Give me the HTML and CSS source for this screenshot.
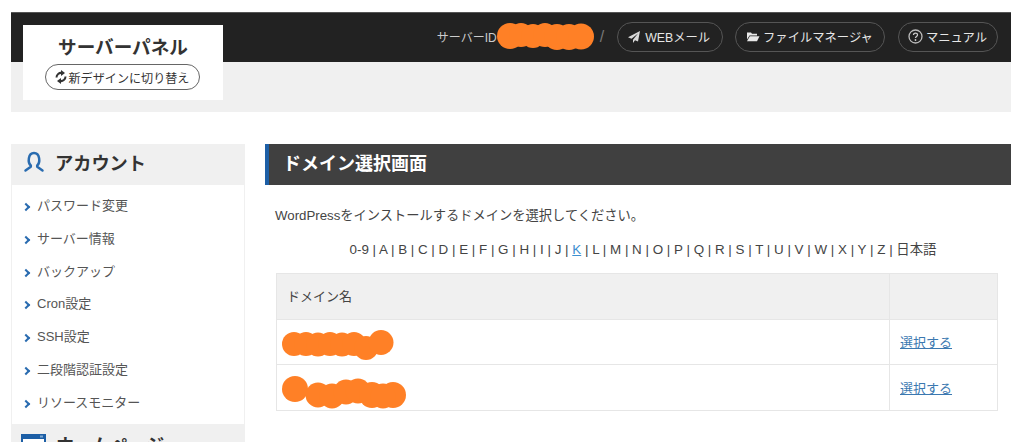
FILE: index.html
```html
<!DOCTYPE html>
<html lang="ja">
<head>
<meta charset="utf-8">
<title>サーバーパネル</title>
<link rel="stylesheet" href="styles.css">
</head>
<body>
<div class="page">
  <header class="header">
    <div class="topbar">
      <span class="server-id">サーバーID</span>
      <svg class="blob-id" width="97" height="28" viewBox="0 0 97 28"><g fill="#ff8026"><circle cx="13" cy="14" r="13"/><circle cx="24" cy="13" r="12"/><circle cx="36" cy="14" r="12"/><circle cx="48" cy="13" r="12"/><circle cx="60" cy="15" r="13"/><circle cx="72" cy="15" r="13"/><circle cx="84" cy="14.500" r="13"/></g></svg>
      <span class="slash">/</span>
      <a class="pill">
        <svg class="pill-icon" width="12" height="12" viewBox="0 0 12 12"><path d="M12 0 10 10.500 7 9.200 5 12V8.800L10 2.500 3.500 7.700 0 6.300z" fill="#d8d8d8"/></svg>
        WEBメール</a>
      <a class="pill pill-files">
        <svg class="pill-icon" width="14" height="12" viewBox="0 0 14 12"><path d="M1 1.500h4l1 1.300h5v1.700H3.500L1 8.500z" fill="#e8e8e8"/><path d="M3.800 5.300H13.500L11 10.300H1z" fill="#e8e8e8"/></svg>
        ファイルマネージャ</a>
      <a class="pill pill-help">
        <svg class="pill-icon" width="15" height="15" viewBox="0 0 15 15"><circle cx="7.500" cy="7.500" r="6.500" fill="none" stroke="#bbb" stroke-width="1.300"/><path d="M5.500 6c0-2.500 4-2.500 4-.1 0 1.600-2 1.500-2 3.100" fill="none" stroke="#ccc" stroke-width="1.300"/><circle cx="7.500" cy="11" r=".9" fill="#ccc"/></svg>
        マニュアル</a>
    </div>
    <div class="subbar"></div>
    <div class="logo">
      <div class="logo-title">サーバーパネル</div>
      <a class="switch">
        <svg width="12" height="14" viewBox="0 0 12 14"><path d="M1.500 7.500A4.500 4.500 0 0 1 7 3" fill="none" stroke="#333" stroke-width="2"/><path d="M10.500 6.500A4.500 4.500 0 0 1 5 11" fill="none" stroke="#333" stroke-width="2"/><path d="M6 0l4 3-4 3z" fill="#333"/><path d="M6 14l-4-3 4-3z" fill="#333"/></svg>
        新デザインに切り替え</a>
    </div>
  </header>

  <div class="columns">
    <aside class="side">
      <h2 class="side-title">
        <svg width="22" height="22" viewBox="0 0 22 22"><path d="M7.800 14.500C4.500 11.500 5 2 11 2s6.500 9.500 3.200 12.500v1.300L19.500 19.500M2.500 19.500l5.300-3.700v-1.300" fill="none" stroke="#2a6cb0" stroke-width="2.500" stroke-linecap="round" stroke-linejoin="round"/></svg>
        アカウント</h2>
      <ul class="side-list">
        <li>パスワード変更</li>
        <li>サーバー情報</li>
        <li>バックアップ</li>
        <li>Cron設定</li>
        <li>SSH設定</li>
        <li>二段階認証設定</li>
        <li>リソースモニター</li>
      </ul>
      <h2 class="side-title side-title-home">
        <svg width="25" height="22" viewBox="0 0 25 22"><rect x="1" y="2" width="23" height="18" fill="#fff" stroke="#1d5fa6" stroke-width="2"/><rect x="1" y="1" width="23" height="5" fill="#1d5fa6"/><rect x="19" y="2.500" width="3" height="2" fill="#7fa8d0"/></svg>
        ホームページ</h2>
    </aside>

    <main class="main">
      <h1 class="main-title">ドメイン選択画面</h1>
      <p class="lead">WordPressをインストールするドメインを選択してください。</p>
      <p class="alpha">0-9 | A | B | C | D | E | F | G | H | I | J | <a>K</a> | L | M | N | O | P | Q | R | S | T | U | V | W | X | Y | Z | 日本語</p>
      <table class="domains">
        <tr><th>ドメイン名</th><th class="col-action"></th></tr>
        <tr>
          <td><svg class="blob" width="112" height="31" viewBox="0 0 112 31"><g fill="#ff8026"><circle cx="12" cy="14" r="12"/><circle cx="24" cy="14" r="12"/><circle cx="36" cy="14.500" r="12"/><circle cx="48" cy="14" r="12"/><circle cx="60" cy="14.500" r="12"/><circle cx="72" cy="14" r="12"/><circle cx="84" cy="18" r="12"/><circle cx="99" cy="12.500" r="12.500"/></g></svg></td>
          <td><a class="pick">選択する</a></td>
        </tr>
        <tr class="row-last">
          <td><svg class="blob blob-two" width="125" height="33" viewBox="0 0 125 33"><g fill="#ff8026"><circle cx="13" cy="13" r="13"/><circle cx="36" cy="19" r="12.500"/><circle cx="50" cy="20" r="12.500"/><circle cx="64" cy="16" r="12.500"/><circle cx="76" cy="15" r="12.500"/><circle cx="90" cy="19" r="13"/><circle cx="111" cy="19" r="13"/><circle cx="101" cy="20" r="12.500"/></g></svg></td>
          <td><a class="pick">選択する</a></td>
        </tr>
      </table>
    </main>
  </div>
</div>
</body>
</html>
```

FILE: styles.css
```css
* { box-sizing: border-box; }
html, body { margin: 0; padding: 0; height: 442px; overflow: hidden; background: #fff; }
body { font-family: "Liberation Sans", "Noto Sans CJK JP", sans-serif; color: #444; font-size: 13px; }
.page { width: 1000px; margin: 12px 0 0 11px; }
.header { position: relative; }
.topbar { height: 50px; background: #222; border-top: 1px solid #555; display: flex; align-items: center; justify-content: flex-end; padding: 0 13px 2px 0; color: #ddd; }
.server-id { font-size: 12px; color: #ccc; }
.blob-id { margin-top: -1px; }
.slash { margin: 0 13px 0 6px; font-size: 16px; color: #777; }
.pill { height: 30px; border: 1px solid #555; border-radius: 15px; display: flex; align-items: center; gap: 5px; padding: 0 12px 0 10px; margin-right: 12px; font-size: 12.3px; color: #e6e6e6; white-space: nowrap; }
.pill:last-child { margin-right: 0; }
.pill-files { gap: 3px; padding-right: 11px; margin-right: 13px; }
.pill-help { gap: 3px; padding: 0 10px 0 9px; }
.subbar { height: 50px; background: #f0f0f0; }
.logo { position: absolute; left: 12px; top: 13px; width: 200px; height: 75px; background: #fff; display: flex; flex-direction: column; align-items: center; padding-top: 10px; }
.logo-title { font-size: 18.600px; font-weight: bold; color: #333; line-height: 25px; height: 29px; }
.switch { height: 26px; width: 155px; margin-left: -2px; border: 1px solid #666; border-radius: 13px; display: flex; align-items: center; justify-content: center; gap: 2px; font-size: 12.100px; color: #333; white-space: nowrap; }
.columns { display: flex; gap: 20px; margin-top: 32px; }
.side { width: 234px; flex: none; background: #f0f0f0; padding: 0 1px; }
.side-title { margin: 0 -1px; height: 41px; display: flex; align-items: center; gap: 10px; padding: 0 0 5px 12px; font-size: 18.200px; font-weight: bold; color: #333; }
.side-title-home { height: 40px; padding: 0 0 0 10px; }
.side-list { list-style: none; margin: 0; padding: 5px 0 4px; background: #fff; }
.side-list li { height: 32.800px; line-height: 32.800px; padding-left: 25px; font-size: 13px; color: #555; position: relative; }
.side-list li::before { content: ""; position: absolute; left: 11px; top: 14px; width: 4px; height: 4px; border-top: 2px solid #2a6cb0; border-right: 2px solid #2a6cb0; transform: rotate(45deg); }
.main { flex: 1; min-width: 0; }
.main-title { margin: 0; height: 41px; background: #404040; border-left: 4px solid #1d5fa6; padding-left: 14px; line-height: 41px; font-size: 18px; font-weight: bold; color: #fff; }
.lead { margin: 23px 0 0 10px; font-size: 13.250px; line-height: 16px; color: #444; }
.alpha { margin: 18px 0 0; text-align: center; padding-left: 10px; font-size: 13.400px; line-height: 16px; color: #444; }
.alpha a { color: #3d8fd0; text-decoration: underline; }
.domains { border-collapse: collapse; width: 722px; margin: 15px 0 0 11px; table-layout: fixed; }
.domains th, .domains td { border: 1px solid #e6e6e6; text-align: left; font-weight: normal; padding: 0 10px; font-size: 13px; }
.domains th { background: #f0f0f0; height: 46px; color: #444; padding-bottom: 3px; }
.domains td { height: 45px; padding-bottom: 1px; }
.domains .row-last td { height: 46px; padding-bottom: 1px; }
.col-action { width: 108px; }
.blob { display: block; margin: 4px 0 -4px -5px; }
.blob-two { margin-top: 5px; margin-bottom: -5px; }
.pick { color: #3b78b0; text-decoration: underline; }
```
